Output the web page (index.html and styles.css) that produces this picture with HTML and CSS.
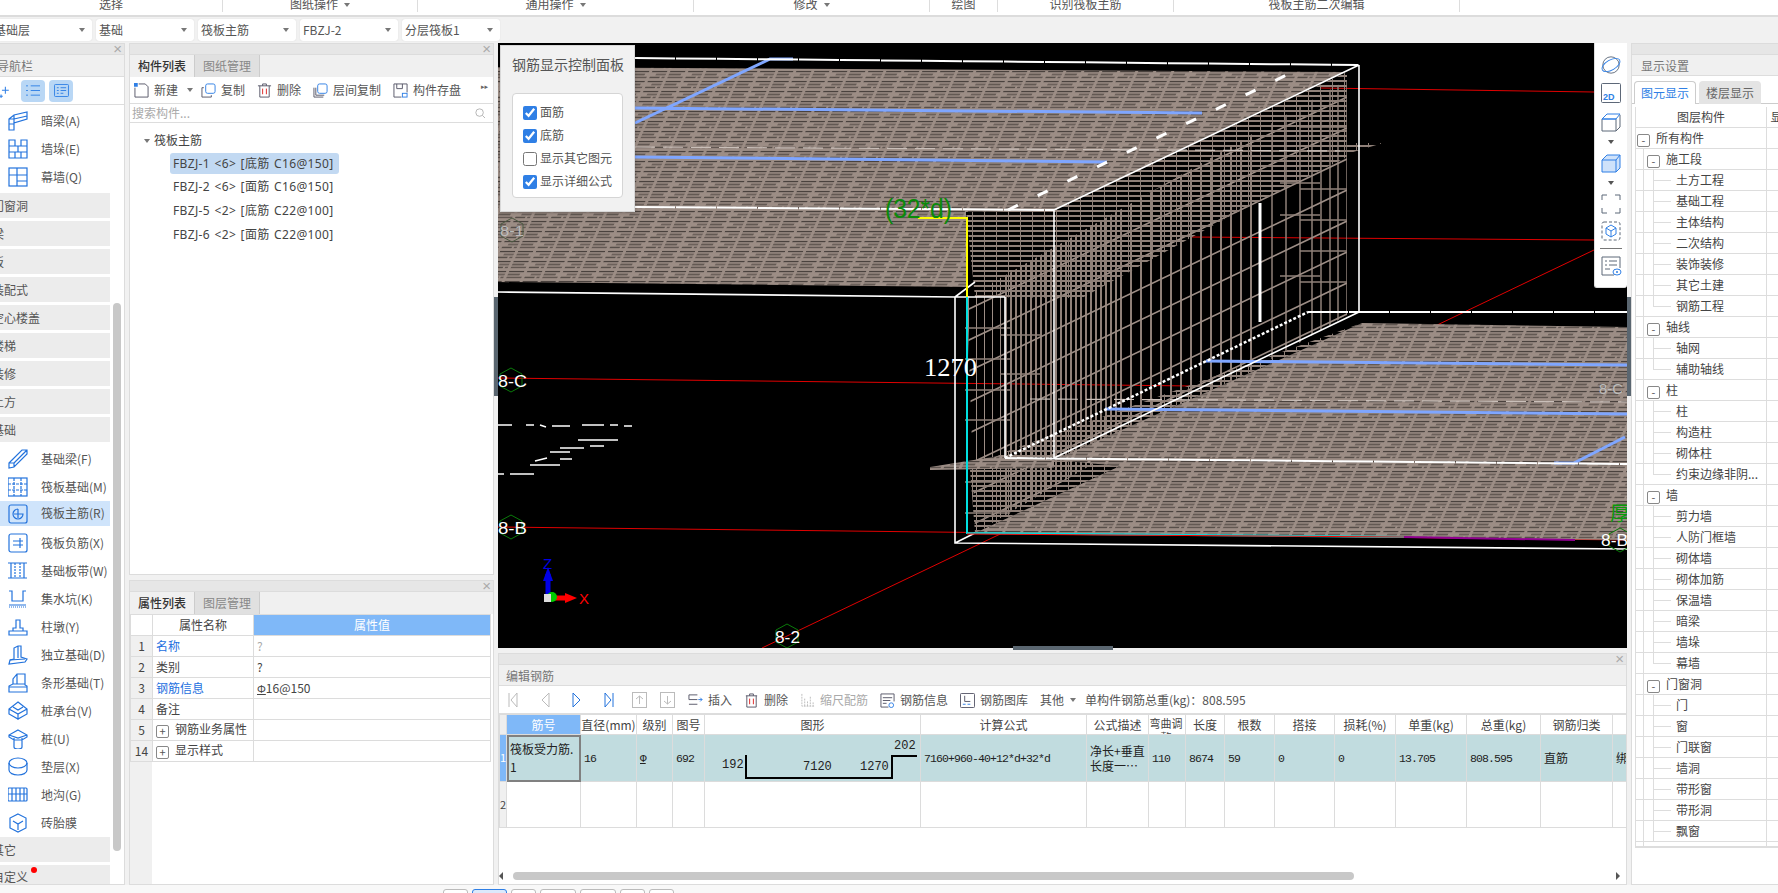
FILE: index.html
```html
<!DOCTYPE html>
<html lang="zh-CN">
<head>
<meta charset="utf-8">
<title>筏板主筋</title>
<link rel="stylesheet" href="styles.css">
</head>
<body>
<header class="ribbon">
  <div class="rb rb1">选择</div>
  <div class="rb rb2">图纸操作<i class="caret"></i></div>
  <div class="rb rb3">通用操作<i class="caret"></i></div>
  <div class="rb rb4">修改<i class="caret"></i></div>
  <div class="rb rb5">绘图</div>
  <div class="rb rb6">识别筏板主筋</div>
  <div class="rb rb7">筏板主筋二次编辑</div>
</header>
<div class="selects">
  <div class="sel sel-first"><span>基础层</span><i class="caret"></i></div>
  <div class="sel"><span>基础</span><i class="caret"></i></div>
  <div class="sel"><span>筏板主筋</span><i class="caret"></i></div>
  <div class="sel"><span>FBZJ-2</span><i class="caret"></i></div>
  <div class="sel"><span>分层筏板1</span><i class="caret"></i></div>
</div>
<main class="main">
  <aside class="nav panel">
    <div class="strip"><span class="x">×</span></div>
    <div class="title title-nav">导航栏</div>
    <div class="nav-tools">
      <svg class="spark" viewBox="0 0 10 14"><path d="M6 1v8M2 5h8M1 10v4M-1 12h4"/></svg>
      <span class="nt-btn"><svg viewBox="0 0 16 14"><path d="M5 2h10M5 7h10M5 12h10M0 2h2M0 7h2M0 12h2"/></svg></span>
      <span class="nt-btn"><svg viewBox="0 0 16 14"><rect x=".5" y=".5" width="15" height="13" rx="1"/><path d="M3 4h2M7 4h6M3 7h2M7 7h6M3 10h2M7 10h3"/></svg></span>
    </div>
    <div class="nav-list">
      <div class="ni"><svg class="ic" viewBox="0 0 20 20"><path d="M1 8l5-4 13-3v7l-13 4v7H1zM1 8h5v11M6 4v8M1 13h5M6 8l13-3"/></svg>暗梁(A)</div>
      <div class="ni"><svg class="ic" viewBox="0 0 20 20"><path d="M1 1h6v6h6V1h6v18H1zM1 7h6M13 7h6M1 13h18M10 7v6M7 13v6M13 13v6"/></svg>墙垛(E)</div>
      <div class="ni"><svg class="ic" viewBox="0 0 20 20"><rect x="1" y="1" width="18" height="18"/><path d="M1 8h18M9 1v18M9 14h10"/></svg>幕墙(Q)</div>
      <div class="cat">门窗洞</div>
      <div class="cat">梁</div>
      <div class="cat">板</div>
      <div class="cat">装配式</div>
      <div class="cat">空心楼盖</div>
      <div class="cat">楼梯</div>
      <div class="cat">装修</div>
      <div class="cat">土方</div>
      <div class="cat">基础</div>
      <div class="ni"><svg class="ic" viewBox="0 0 20 20"><path d="M1 14L14 1h5v4L6 18l-5 1zM1 14h5v4M6 14L19 1M9 11l6-6"/></svg>基础梁(F)</div>
      <div class="ni"><svg class="ic" viewBox="0 0 20 20"><rect x="0" y="1" width="19" height="18"/><path d="M0 7h19M0 13h19M6 1v18M13 1v18" stroke-dasharray="3 1"/></svg>筏板基础(M)</div>
      <div class="ni ni-on"><svg class="ic" viewBox="0 0 20 20"><rect x="1" y="1" width="18" height="18" rx="2"/><path d="M10 5a5 5 0 1 0 5 5H6M10 5v9"/></svg>筏板主筋(R)</div>
      <div class="ni"><svg class="ic" viewBox="0 0 20 20"><rect x="1" y="1" width="18" height="18" rx="2"/><path d="M5 8h10M5 12h10M12 5v10"/></svg>筏板负筋(X)</div>
      <div class="ni"><svg class="ic" viewBox="0 0 20 20"><path d="M0 2h19M0 17h19M3 2v15M16 2v15"/><path d="M7 2v15M12 2v15" stroke-dasharray="2 1"/></svg>基础板带(W)</div>
      <div class="ni"><svg class="ic" viewBox="0 0 20 20"><path d="M1 2h3v10h11V2h3M1 16h17" /><path d="M1 18h17" stroke-dasharray="1 1"/></svg>集水坑(K)</div>
      <div class="ni"><svg class="ic" viewBox="0 0 20 20"><path d="M1 18v-4h4v-3h3V3h4v8h3v3h4v4zM5 14h10"/></svg>柱墩(Y)</div>
      <div class="ni"><svg class="ic" viewBox="0 0 20 20"><path d="M6 14V3l4-2h3v11l6 2-2 3-16 2 1-4zM10 1v12"/><path d="M2 15l15-1" /></svg>独立基础(D)</div>
      <div class="ni"><svg class="ic" viewBox="0 0 20 20"><path d="M5 11V6l4-5h8v11l2 1v6H1v-6zM9 1v10M5 11h12M1 14h18"/></svg>条形基础(T)</div>
      <div class="ni"><svg class="ic" viewBox="0 0 20 20"><path d="M10 1l9 7v5l-9 5-9-5V8zM1 8l9 5 9-5M10 13v6M5 6l5 3 5-3"/></svg>桩承台(V)</div>
      <div class="ni"><svg class="ic" viewBox="0 0 20 20"><path d="M10 1l9 5v2l-5 3H6L1 8V6zM1 6l9 3 9-3M6 9v9a4 2 0 0 0 8 0V9"/></svg>桩(U)</div>
      <div class="ni"><svg class="ic" viewBox="0 0 20 20"><ellipse cx="10" cy="6" rx="9" ry="5"/><path d="M1 6v7c0 3 4 5 9 5s9-2 9-5V6"/></svg>垫层(X)</div>
      <div class="ni"><svg class="ic" viewBox="0 0 20 20"><rect x="0" y="3" width="19" height="13" rx="1"/><path d="M0 9h19M4 3v13M8 3v13M12 3v13M16 3v13"/></svg>地沟(G)</div>
      <div class="ni"><svg class="ic" viewBox="0 0 20 20"><path d="M10 1l8 4v10l-8 4-8-4V5zM5 8l5 3 5-3M10 11v6"/></svg>砖胎膜</div>
      <div class="cat cat-o">其它</div>
      <div class="cat cat-last">自定义<i class="dot"></i></div>
    </div>
    <div class="nav-scroll"></div>
  </aside>

  <div class="mid">
    <section class="panel comp">
      <div class="strip"><span class="x">×</span></div>
      <div class="tabs"><span class="tab tab-on">构件列表</span><span class="tab">图纸管理</span></div>
      <div class="comp-tools">
        <span class="ct ct-new"><svg class="tic" viewBox="0 0 16 16"><path d="M5 1h7l3 3v11H1V5"/><rect class="blue-fill" x="0" y="0" width="4" height="4"/></svg>新建<i class="caret"></i></span>
        <span class="ct"><svg class="tic" viewBox="0 0 16 16"><rect class="blue" x="5" y="1" width="10" height="10" rx="2"/><path d="M3 5H1v10h10v-2"/></svg>复制</span>
        <span class="ct"><svg class="tic" viewBox="0 0 16 16"><path d="M1 3h14M6 3V1h4v2M3 3v12h10V3"/><path class="red" d="M6 6v6M10 6v6"/></svg>删除</span>
        <span class="ct"><svg class="tic" viewBox="0 0 16 16"><rect class="blue" x="5" y="1" width="10" height="10" rx="2"/><path d="M1 5v10h10M3 5v8h9"/></svg>层间复制</span>
        <span class="ct"><svg class="tic" viewBox="0 0 16 16"><path d="M1 1h14v9M1 1v14h8M4 1v5h6V1"/><rect class="blue" x="10" y="11" width="5" height="4"/></svg>构件存盘</span>
        <span class="more">▸▸</span>
      </div>
      <div class="search"><span>搜索构件...</span><svg class="mag" viewBox="0 0 12 12"><circle cx="5.5" cy="5.5" r="4.5"/><path d="M9 9l3 3"/></svg></div>
      <div class="tree">
        <div class="tree-root"><i class="caret"></i>筏板主筋</div>
        <div class="tree-item tree-on">FBZJ-1 &lt;6&gt; [底筋 C16@150]</div>
        <div class="tree-item">FBZJ-2 &lt;6&gt; [面筋 C16@150]</div>
        <div class="tree-item">FBZJ-5 &lt;2&gt; [底筋 C22@100]</div>
        <div class="tree-item">FBZJ-6 &lt;2&gt; [面筋 C22@100]</div>
      </div>
    </section>
    <section class="panel props">
      <div class="strip"><span class="x">×</span></div>
      <div class="tabs"><span class="tab tab-on">属性列表</span><span class="tab">图层管理</span></div>
      <div class="prop-body">
        <table class="ptable">
          <colgroup><col class="pc1"><col class="pc2"><col class="pc3"></colgroup>
          <tr><th class="corner"></th><th>属性名称</th><th class="pv">属性值</th></tr>
          <tr><td class="idx">1</td><td class="link">名称</td><td class="mute">?</td></tr>
          <tr><td class="idx">2</td><td>类别</td><td>?</td></tr>
          <tr><td class="idx">3</td><td class="link">钢筋信息</td><td><span class="grade">Φ</span>16@150</td></tr>
          <tr><td class="idx">4</td><td>备注</td><td></td></tr>
          <tr><td class="idx">5</td><td><i class="box">+</i><span class="indent">钢筋业务属性</span></td><td></td></tr>
          <tr><td class="idx">14</td><td><i class="box">+</i><span class="indent">显示样式</span></td><td></td></tr>
        </table>
      </div>
    </section>
  </div>

  <div class="center">
    <div class="view">
      <svg class="scene" viewBox="498 43 1129 605" width="1129" height="605">
        <defs>
          <pattern id="mesh" width="36" height="10" patternUnits="userSpaceOnUse" patternTransform="skewX(-24)">
            <rect width="36" height="10" fill="#9c8d85"/>
            <rect x="0" y="1" width="15" height="1" fill="#352f2c"/>
            <rect x="18" y="1" width="15" height="1" fill="#352f2c"/>
            <rect x="5" y="4" width="10" height="1" fill="#453d39"/>
            <rect x="18" y="4" width="12" height="1" fill="#352f2c"/>
            <rect x="0" y="7" width="10" height="1" fill="#352f2c"/>
            <rect x="12" y="7" width="3" height="1" fill="#453d39"/>
            <rect x="18" y="7" width="15" height="1" fill="#453d39"/>
          </pattern>
          <pattern id="mesh2" width="24" height="5" patternUnits="userSpaceOnUse">
            <rect width="24" height="2" fill="#8f8078"/>
            <rect width="1" height="5" fill="#8f8078"/>
            <rect x="12" width="1" height="5" fill="#8f8078"/>
          </pattern>
          <pattern id="vg5" width="5" height="10" patternUnits="userSpaceOnUse"><rect width="2" height="10" fill="#8f8078"/></pattern>
          <pattern id="vg8" width="8" height="10" patternUnits="userSpaceOnUse"><rect width="1" height="10" fill="#9c8d85"/></pattern>
          <pattern id="vg10" width="10" height="10" patternUnits="userSpaceOnUse"><rect width="2" height="10" fill="#8f8078"/></pattern>
          <clipPath id="wall"><polygon points="967,297 1347,80 1347,315 975,533"/></clipPath>
        </defs>
        <g class="red">
          <path d="M498 378L1627 391M498 527L1627 540M762 648L1594 250M1321 88L1594 92M1190 237L1594 240"/>
        </g>
        <g clip-path="url(#wall)">
          <rect x="967" y="80" width="38" height="460" fill="url(#vg8)"/>
          <rect x="1005" y="80" width="115" height="460" fill="url(#vg5)"/>
          <rect x="1120" y="80" width="140" height="460" fill="url(#vg10)"/>
          <path class="brown2" d="M1272 80V500M1286 80V500M1300 80V500M1312 80V500M1321 80V500M1330 80V500M1338 80V500M1347 80V500"/>
          <path class="brown" d="M967 279L1347 97M967 310L1347 128M967 341L1347 159M967 372L1347 190M967 403L1347 221M967 434L1347 252M967 465L1347 283M967 496L1347 314M967 527L1347 345"/>
        </g>
        <path class="brown2" d="M965 328h45M965 359h45M965 390h45M965 420h45M965 482h45M965 513h45M1300 127h47M1300 189h47M1300 220h47M1300 251h47M1300 282h47M1000 335h40M1000 374h40M1280 183h40M1280 215h40M1280 276h40"/>
        <polygon class="mesh" points="498,67 1345,72 1054,210 966,212 966,287 498,282"/>
        <polygon class="mesh-t" points="1054,210 1347,72 1347,157 1232,215 1082,298 975,297 966,212"/>
        <polygon class="mesh-t" points="1200,143 1383,143 1340,156 1200,156"/>
        <polygon class="mesh" points="1362,323 1627,327 1627,540 975,533 1120,466 1054,460"/>
        <polygon class="mesh-t" points="1005,452 1362,323 1054,460 1120,466 975,533 970,470"/>
        <polygon class="mesh" points="930,467 1005,455 1054,460 1054,468 930,470"/>
        <path class="lite" d="M635 147L1340 151M1030 399L1627 402"/>
        <g class="blue-line">
          <path d="M635 108L1202 113M635 157L1107 162M635 123L770 59H793M1206 361L1627 365M1105 409L1627 414M1554 463H1574L1625 437"/>
        </g>
        <g class="wh">
          <path d="M498 292L955 297H1005M955 297V543L1627 549M1005 297V458M1054 210V458M1359 65V312M1054 210L1359 65M1054 458L1359 312M955 297L975 282M955 543L975 533"/>
          <path class="dash" d="M635 58L1358 65M635 207L1054 210M1005 458L1627 464M1308 312H1627"/>
          <path class="dash2" d="M1008 210L1297 70"/>
          <path class="dash3" d="M1005 458L1308 312"/>
          <path class="thick" d="M1260 203V322"/>
        </g>
        <path class="yellow" d="M918 218H967V297"/>
        <path class="cyan" d="M967 297V533L1404 537"/>
        <path class="purple" d="M1404 537L1575 540"/>
        <path class="red-strong" d="M967 534L1404 537"/>
        <path class="specks" d="M498 425h14M526 425h8M540 425l6 2M552 426h18M582 425h22M610 425h8M624 426h8M578 440h40M560 448h24M590 446h14M550 452h20M530 465h30M560 459h12M535 461l12-3M498 474h6M510 474h24"/>
        <g class="hex">
          <polygon points="511,368 522,374 522,386 511,392 500,386 500,374"/>
          <polygon points="511,515 522,521 522,533 511,539 500,533 500,521"/>
          <polygon points="787,624 798,630 798,642 787,648 776,642 776,630"/>
          <polygon class="faint" points="512,218 523,224 523,236 512,242 501,236 501,224"/>
          <polygon points="1620,528 1631,534 1631,546 1620,552 1609,546 1609,534"/>
        </g>
        <text class="axis-t" x="498" y="387" textLength="29" lengthAdjust="spacingAndGlyphs">8-C</text>
        <text class="axis-t" x="498" y="534" textLength="29" lengthAdjust="spacingAndGlyphs">8-B</text>
        <text class="axis-t" x="775" y="643" textLength="25" lengthAdjust="spacingAndGlyphs">8-2</text>
        <text class="axis-t" x="1601" y="546" textLength="27" lengthAdjust="spacingAndGlyphs">8-B</text>
        <text class="axis-f" x="500" y="236" textLength="24" lengthAdjust="spacingAndGlyphs">8-1</text>
        <text class="axis-f" x="1599" y="394" textLength="24" lengthAdjust="spacingAndGlyphs">8-C</text>
        <text class="gtxt" x="1610" y="521">厚</text>
        <text class="dim-g" x="885" y="218" textLength="67" lengthAdjust="spacingAndGlyphs">(32*d)</text>
        <text class="dim-w" x="924" y="376" textLength="53" lengthAdjust="spacingAndGlyphs">1270</text>
        <path class="ax-z" d="M548 597V574"/><polygon class="ax-zf" points="548,567 543,581 553,581"/>
        <path class="ax-x" d="M552 598H566"/><polygon class="ax-xf" points="577,598 565,593 565,603"/>
        <circle class="ax-g" cx="552" cy="597" r="5"/><rect class="ax-c" x="544" y="594" width="7" height="8"/>
        <text class="ax-zt" x="543" y="569">Z</text>
        <text class="ax-xt" x="579" y="604">X</text>
      </svg>

      <div class="sash-left"></div>
      <div class="sash-bottom"></div>
      <div class="sash-right"></div>

      <div class="rebar-box">
        <div class="rb-title">钢筋显示控制面板</div>
        <div class="rb-inner">
          <label class="chk"><input type="checkbox" checked>面筋</label>
          <label class="chk"><input type="checkbox" checked>底筋</label>
          <label class="chk"><input type="checkbox">显示其它图元</label>
          <label class="chk"><input type="checkbox" checked>显示详细公式</label>
        </div>
      </div>

      <div class="vtools">
        <svg class="v v-globe" viewBox="0 0 22 22"><circle class="gr" cx="11" cy="11" r="9"/><ellipse class="bl tilt" cx="11" cy="11" rx="11" ry="5.5"/></svg>
        <svg class="v v-2d" viewBox="0 0 20 20"><rect class="gr" x=".5" y=".5" width="19" height="19" rx="1"/><text class="t2d" x="2" y="17">2D</text></svg>
        <svg class="v v-cube" viewBox="0 0 20 20"><path class="gr" d="M1 7v12h14l4-4V3M15 19V7"/><path class="bl" d="M1 7l5-5h13l-4 5zM15 7H1"/></svg>
        <i class="vcaret"></i>
        <svg class="v v-cube" viewBox="0 0 20 20"><path class="blf" d="M1 7v12h14l4-4V2H6zM15 19V7M1 7h14l4-5"/></svg>
        <i class="vcaret"></i>
        <svg class="v v-frame" viewBox="0 0 20 20"><path class="gr" d="M1 6V1h5M14 1h5v5M19 14v5h-5M6 19H1v-5"/></svg>
        <svg class="v v-dcube" viewBox="0 0 20 20"><rect class="grd" x="1" y="1" width="18" height="18" rx="2"/><path class="bl" d="M10 4l5 3v6l-5 3-5-3V7zM5 7l5 3 5-3M10 10v6"/></svg>
        <hr class="vrule">
        <svg class="v v-list" viewBox="0 0 20 20"><path class="gr" d="M13 19H1V1h18v11M4 5h2M8 5h8M4 9h2M8 9h8M4 13h5"/><ellipse class="bl" cx="16" cy="16" rx="4" ry="3"/><circle class="blfull" cx="16" cy="16" r="1"/></svg>
      </div>
    </div>

    <section class="panel edit">
      <div class="strip"><span class="x">×</span></div>
      <div class="title title-edit">编辑钢筋</div>
      <div class="edit-tools">
        <svg class="nav-ic ni1" viewBox="0 0 10 16"><path d="M1 1v14M9 1L3 8l6 7z"/></svg>
        <svg class="nav-ic ni2" viewBox="0 0 10 16"><path d="M9 1L2 8l7 7z"/></svg>
        <svg class="nav-ic ni3 act" viewBox="0 0 10 16"><path d="M1 1l7 7-7 7z"/></svg>
        <svg class="nav-ic ni4 act" viewBox="0 0 10 16"><path d="M9 1v14M1 1l6 7-6 7z"/></svg>
        <svg class="nav-box nb1" viewBox="0 0 15 16"><rect x=".5" y=".5" width="14" height="15"/><path d="M7.5 12V4M4 7l3.5-3L11 7"/></svg>
        <svg class="nav-box nb2" viewBox="0 0 15 16"><rect x=".5" y=".5" width="14" height="15"/><path d="M7.5 4v8M4 9l3.5 3L11 9"/></svg>
        <span class="et et-ins"><svg class="tic" viewBox="0 0 16 14"><path d="M10 1H1v5h9M1 11h9"/><path class="blue" d="M11 6h4M13 4l2 2-2 2"/></svg>插入</span>
        <span class="et et-del"><svg class="tic" viewBox="0 0 14 16"><path d="M1 3h12M5 3V1h4v2M2 3v12h10V3"/><path class="red" d="M5 6v6M9 6v6"/></svg>删除</span>
        <span class="et et-off"><svg class="tic tic-off" viewBox="0 0 14 16"><path d="M1 1v13h13M4 6v8M7 9v5M10 4v10M13 10v4" stroke-dasharray="2 1"/></svg>缩尺配筋</span>
        <span class="et et-info"><svg class="tic" viewBox="0 0 16 16"><path d="M9 15H1V1h14v8M3 5h10M3 8h8M3 11h4"/><circle class="blue" cx="12" cy="13" r="2.5"/></svg>钢筋信息</span>
        <span class="et et-lib"><svg class="tic" viewBox="0 0 16 16"><rect x=".5" y=".5" width="15" height="15" rx="1"/><path d="M5 3v6h6"/><path class="blue" d="M3 12h3M8 12h3"/></svg>钢筋图库</span>
        <span class="et et-oth">其他<i class="caret"></i></span>
        <span class="et et-tot">单构件钢筋总重(kg)：808.595</span>
      </div>
      <div class="grid-wrap">
        <table class="gtable">
          <colgroup>
            <col class="c7"><col class="c74"><col class="c56"><col class="c36"><col class="c32"><col class="c216"><col class="c166"><col class="c62"><col class="c37"><col class="c39"><col class="c50"><col class="c60"><col class="c61"><col class="c71"><col class="c74"><col class="c72"><col class="c16">
          </colgroup>
          <tr class="gh">
            <th class="gcorner"></th><th class="gsel">筋号</th><th>直径(mm)</th><th>级别</th><th>图号</th><th>图形</th><th>计算公式</th><th>公式描述</th><th class="wrap-h"><span>弯曲调整</span></th><th>长度</th><th>根数</th><th>搭接</th><th>损耗(%)</th><th>单重(kg)</th><th>总重(kg)</th><th>钢筋归类</th><th></th>
          </tr>
          <tr class="gr1">
            <td class="rn rn-on">1</td>
            <td class="cur">筏板受力筋.<br>1</td>
            <td class="mono">16</td>
            <td class="mono"><span class="grade">Φ</span></td>
            <td class="mono">692</td>
            <td class="shape">
              <div class="shape-in">
                <svg class="bar" viewBox="0 0 216 46" width="216" height="46"><path d="M41 20V43H187V21H212"/></svg>
                <span class="sn sn1">192</span><span class="sn sn2">7120</span><span class="sn sn3">1270</span><span class="sn sn4">202</span>
              </div>
            </td>
            <td class="mono">7160+960-40+12*d+32*d</td>
            <td class="desc">净长+垂直长度一…</td>
            <td class="mono">110</td>
            <td class="mono">8674</td>
            <td class="mono">59</td>
            <td class="mono">0</td>
            <td class="mono">0</td>
            <td class="mono">13.705</td>
            <td class="mono">808.595</td>
            <td>直筋</td>
            <td class="clip">绑</td>
          </tr>
          <tr class="gr2">
            <td class="rn">2</td><td></td><td></td><td></td><td></td><td></td><td></td><td></td><td></td><td></td><td></td><td></td><td></td><td></td><td></td><td></td><td></td>
          </tr>
        </table>
        <div class="hscroll">
          <i class="sa sa-l"></i><div class="thumb"></div><i class="sa sa-r"></i>
        </div>
      </div>
    </section>
  </div>

  <aside class="right panel">
    <div class="strip"></div>
    <div class="title title-right">显示设置</div>
    <div class="r-tabs"><span class="r-tab r-on">图元显示</span><span class="r-tab">楼层显示</span></div>
    <div class="r-table">
      <div class="r-row r-head"><div>图层构件</div><div>显</div></div>
      <div class="r-row"><div class="l0"><i class="box">-</i>所有构件</div><div></div></div>
      <div class="r-row"><div class="l1 g0"><i class="box">-</i>施工段</div><div></div></div>
      <div class="r-row"><div class="l2 g1">土方工程</div><div></div></div>
      <div class="r-row"><div class="l2 g1">基础工程</div><div></div></div>
      <div class="r-row"><div class="l2 g1">主体结构</div><div></div></div>
      <div class="r-row"><div class="l2 g1">二次结构</div><div></div></div>
      <div class="r-row"><div class="l2 g1">装饰装修</div><div></div></div>
      <div class="r-row"><div class="l2 g1">其它土建</div><div></div></div>
      <div class="r-row"><div class="l2 g1 g-end">钢筋工程</div><div></div></div>
      <div class="r-row"><div class="l1 g0"><i class="box">-</i>轴线</div><div></div></div>
      <div class="r-row"><div class="l2 g1">轴网</div><div></div></div>
      <div class="r-row"><div class="l2 g1 g-end">辅助轴线</div><div></div></div>
      <div class="r-row"><div class="l1 g0"><i class="box">-</i>柱</div><div></div></div>
      <div class="r-row"><div class="l2 g1">柱</div><div></div></div>
      <div class="r-row"><div class="l2 g1">构造柱</div><div></div></div>
      <div class="r-row"><div class="l2 g1">砌体柱</div><div></div></div>
      <div class="r-row"><div class="l2 g1 g-end">约束边缘非阴...</div><div></div></div>
      <div class="r-row"><div class="l1 g0"><i class="box">-</i>墙</div><div></div></div>
      <div class="r-row"><div class="l2 g1">剪力墙</div><div></div></div>
      <div class="r-row"><div class="l2 g1">人防门框墙</div><div></div></div>
      <div class="r-row"><div class="l2 g1">砌体墙</div><div></div></div>
      <div class="r-row"><div class="l2 g1">砌体加筋</div><div></div></div>
      <div class="r-row"><div class="l2 g1">保温墙</div><div></div></div>
      <div class="r-row"><div class="l2 g1">暗梁</div><div></div></div>
      <div class="r-row"><div class="l2 g1">墙垛</div><div></div></div>
      <div class="r-row"><div class="l2 g1 g-end">幕墙</div><div></div></div>
      <div class="r-row"><div class="l1 g0"><i class="box">-</i>门窗洞</div><div></div></div>
      <div class="r-row"><div class="l2 g1">门</div><div></div></div>
      <div class="r-row"><div class="l2 g1">窗</div><div></div></div>
      <div class="r-row"><div class="l2 g1">门联窗</div><div></div></div>
      <div class="r-row"><div class="l2 g1">墙洞</div><div></div></div>
      <div class="r-row"><div class="l2 g1">带形窗</div><div></div></div>
      <div class="r-row"><div class="l2 g1">带形洞</div><div></div></div>
      <div class="r-row"><div class="l2 g1">飘窗</div><div></div></div>
      <div class="r-row r-stub"><div class="g0 g1"></div><div></div></div>
    </div>
  </aside>
</main>
<footer class="foot">
  <span class="ft ft25"></span><span class="ft ft35 ft-on"></span><span class="ft ft25"></span><span class="ft ft36"></span><span class="ft ft36"></span><span class="ft ft25"></span><span class="ft ft25"></span>
</footer>
</body>
</html>
```
FILE: styles.css
```css
* { box-sizing: border-box; }
html, body { margin: 0; height: 893px; overflow: hidden; }
body {
  width: 1778px;
  background: #f1f1f1;
  color: #444;
  font: 12px/1.2 "Noto Sans CJK SC", "Noto Sans", sans-serif;
  display: flex;
  flex-direction: column;
}
i { font-style: normal; }
.caret {
  display: inline-block;
  width: 0; height: 0;
  border: 3px solid transparent;
  border-top: 4px solid #777;
  border-bottom: 0;
}

/* ribbon */
.ribbon { display: flex; height: 17px; flex: none; background: #fff; border-bottom: 2px solid #dcdcdc; overflow: hidden; }
.rb { height: 12px; line-height: 8px; text-align: center; border-right: 1px solid #ddd; color: #555; white-space: nowrap; }
.rb .caret { margin-left: 6px; vertical-align: 2px; }
.rb1 { width: 223px; } .rb2 { width: 195px; } .rb3 { width: 276px; } .rb4 { width: 236px; }
.rb5 { width: 68px; } .rb6 { width: 176px; } .rb7 { width: 286px; }

/* selects */
.selects { display: flex; height: 26px; flex: none; gap: 4px; padding-top: 2px; }
.sel { width: 98px; height: 22px; background: #fff; border-radius: 3px; box-shadow: 0 0 1px #ccc; display: flex; align-items: center; justify-content: space-between; padding: 0 7px 0 3px; color: #555; font-size: 12px; }
.sel-first { width: 92px; padding-left: 0; border-radius: 0 3px 3px 0; }
.sel-first span { margin-left: -6px; }

/* main grid */
.main { display: flex; height: 842px; flex: none; }
.panel { background: #fff; border: 1px solid #dcdcdc; position: relative; overflow: hidden; }
.strip { height: 11px; background: #e6e6e6; border-bottom: 1px solid #dcdcdc; position: relative; }
.x { position: absolute; right: 2px; top: -3px; font: 15px/15px "Liberation Sans", sans-serif; color: #aaa; }
.title { height: 22px; background: #f0f0f0; border-bottom: 1px solid #ddd; line-height: 21px; color: #777; }

/* nav */
.nav { width: 125px; flex: none; border-left: 0; }
.title-nav { text-indent: -3px; }
.nav-tools { height: 28px; display: flex; align-items: center; gap: 4px; border-bottom: 1px solid #ddd; padding-left: 21px; position: relative; }
.spark { position: absolute; left: 0; top: 9px; width: 9px; height: 12px; fill: none; stroke: #2f7fe5; stroke-width: 1.2; overflow: visible; }
.nt-btn { width: 24px; height: 22px; border-radius: 4px; background: #b9d7f5; display: flex; align-items: center; justify-content: center; }
.nt-btn svg { width: 15px; height: 13px; fill: none; stroke: #2f7fe5; stroke-width: 1; }
.nav-list { width: 110px; overflow: hidden; height: 782px; padding-top: 2px; }
.ni { height: 28px; display: flex; align-items: center; padding-left: 8px; white-space: nowrap; color: #555; }
.ni-on { background: #cfe4fb; height: 25px; margin-bottom: 3px; }
.ic { width: 20px; height: 20px; margin-right: 13px; flex: none; fill: none; stroke: #2272dc; stroke-width: 1.2; }
.cat { height: 25px; margin-bottom: 3px; background: #ececec; line-height: 25px; text-indent: -8px; position: relative; color: #555; white-space: nowrap; overflow: hidden; }
.ni + .cat { margin-top: 2px; }
.ni + .cat-o { margin-top: 0; }
.cat-last { height: 20px; margin-bottom: 0; overflow: visible; line-height: 24px; }
.dot { position: absolute; left: 31px; top: 2px; width: 6px; height: 6px; border-radius: 50%; background: #f00; }
.nav-scroll { position: absolute; left: 113px; top: 259px; width: 8px; height: 548px; border-radius: 4px; background: #c8c8c8; }

/* middle */
.mid { width: 365px; flex: none; margin-left: 4px; display: flex; flex-direction: column; gap: 5px; }
.comp { height: 532px; flex: none; }
.props { height: 305px; flex: none; }
.tabs { height: 22px; background: #f0f0f0; display: flex; }
.tab { width: 65px; height: 22px; background: #e0e0e0; color: #888; text-align: center; line-height: 22px; border-right: 1px solid #ccc; }
.tab-on { background: #f0f0f0; color: #333; font-weight: 500; }
.comp-tools { height: 27px; display: flex; align-items: center; padding-left: 4px; border-bottom: 1px solid #ddd; position: relative; color: #555; white-space: nowrap; }
.ct { display: flex; align-items: center; margin-right: 12px; }
.ct-new .caret { margin-left: 9px; }
.ct-new { margin-right: 8px; }
.tic { width: 15px; height: 15px; margin-right: 5px; fill: none; stroke: #556; stroke-width: 1; flex: none; }
.tic .blue, .blue { stroke: #2f7fe5; }
.tic .red { stroke: #d22; }
.tic .blue-fill { fill: #2f7fe5; stroke: none; }
.more { position: absolute; right: 2px; top: 1px; width: 10px; height: 19px; font: 7px/19px "DejaVu Sans", sans-serif; color: #666; }
.search { height: 19px; border-bottom: 1px solid #ddd; display: flex; align-items: center; justify-content: space-between; padding: 0 8px 0 2px; color: #aaa; }
.mag { width: 10px; height: 10px; fill: none; stroke: #aaa; overflow: visible; }
.tree { padding-top: 5px; }
.tree-root { height: 24px; line-height: 24px; padding-left: 14px; }
.tree-root .caret { margin-right: 4px; vertical-align: 2px; }
.tree-item { height: 24px; line-height: 24px; margin-left: 40px; padding-left: 3px; width: 169px; white-space: nowrap; font-family: "Noto Sans", "Noto Sans CJK SC", sans-serif; letter-spacing: .35px; word-spacing: 1px; }
.tree-on { background: #c2d9f2; border-radius: 3px; height: 21px; line-height: 21px; margin-top: 1px; margin-bottom: 1px; }
.prop-body { height: 272px; background: linear-gradient(90deg, #f0f0f0 22px, #fff 22px); }
.ptable { width: 361px; table-layout: fixed; border-collapse: collapse; background: #fff; }
.pc1 { width: 22px; } .pc2 { width: 101px; }
.ptable th, .ptable td { height: 21px; border: 1px solid #dcdcdc; padding: 0 3px; font-weight: 400; white-space: nowrap; overflow: hidden; }
.ptable th { background: #fff; color: #444; }
.ptable .pv { background: #7fb8f8; color: #fff; }
.ptable .idx { background: #f0f0f0; text-align: center; padding: 0; }
.ptable .link { color: #1c6fe0; }
.ptable .mute { color: #aaa; }
.box { display: inline-block; width: 13px; height: 13px; border: 1px solid #888; border-radius: 2px; line-height: 10px; text-align: center; font-size: 11px; color: #555; background: #fff; vertical-align: -2px; }
.indent { margin-left: 6px; }
.grade { text-decoration: underline; font-size: 11px; }

/* center */
.center { width: 1129px; flex: none; margin-left: 4px; display: flex; flex-direction: column; gap: 5px; }
.view { height: 605px; flex: none; background: #000; position: relative; }
.scene { display: block; }
.scene .red, .red { fill: none; }
.scene .red { stroke: #e00000; stroke-width: 1; }
.mesh { fill: url(#mesh); }
.mesh-t { fill: url(#mesh2); }
.brown { fill: none; stroke: #9c8d85; stroke-width: 1.6; }
.brown2 { fill: none; stroke: #8f8078; stroke-width: 1.5; }
.lite { fill: none; stroke: #c9bfb9; stroke-width: 1.2; stroke-dasharray: 20 8; }
.blue-line { fill: none; stroke: #7fa6ff; stroke-width: 3; }
.wh { fill: none; stroke: #fff; stroke-width: 1.6; }
.wh .dash { stroke-width: 2; stroke-dasharray: 40 1; }
.wh .dash2 { stroke-width: 3; stroke-dasharray: 11 22; }
.wh .dash3 { stroke-width: 2.5; stroke-dasharray: 3 2; }
.wh .thick { stroke-width: 3; }
.yellow { fill: none; stroke: #ff0; stroke-width: 2; }
.cyan { fill: none; stroke: #00e0e0; stroke-width: 2; }
.purple { fill: none; stroke: #900090; stroke-width: 2; }
.red-strong { fill: none; stroke: #f00; stroke-width: 1; }
.specks { fill: none; stroke: #fff; stroke-width: 1.5; }
.hex { fill: none; stroke: #0a7a0a; stroke-width: 1; }
.hex .faint { stroke: #4d5a42; }
.axis-t { fill: #fff; font: 17px "Liberation Sans", sans-serif; }
.axis-f { fill: #bbb; font: 14px "Liberation Sans", sans-serif; }
.gtxt { fill: #0a9a0a; font: 20px "Noto Sans CJK SC", sans-serif; }
.dim-g { fill: #0a8a0a; font: 28px "Liberation Sans", sans-serif; }
.dim-w { fill: #fff; font: 26px "Liberation Serif", serif; }
.ax-z { stroke: #0000e6; stroke-width: 5; }
.ax-zf { fill: #0000e6; }
.ax-x { stroke: #f00; stroke-width: 5; }
.ax-xf { fill: #f00; }
.ax-g { fill: #0c0; }
.ax-c { fill: #ddd; }
.ax-zt { fill: #0000e6; font: 15px "Liberation Sans", sans-serif; }
.ax-xt { fill: #f00; font: 15px "Liberation Sans", sans-serif; }

.sash-left { position: absolute; left: -4px; top: 254px; width: 4px; height: 99px; background: #5a6670; }
.sash-bottom { position: absolute; left: 515px; bottom: -2px; width: 100px; height: 4px; background: #5a6670; }
.sash-right { position: absolute; right: -5px; top: 254px; width: 5px; height: 99px; background: #5a6670; }

.rebar-box { position: absolute; left: 2px; top: 2px; width: 135px; height: 167px; background: #f1f1f1; border: 1px solid #d8d8d8; box-shadow: 0 1px 3px rgba(0,0,0,.2); padding: 0 11px; }
.rb-title { font-size: 14px; line-height: 20px; height: 47px; padding-top: 8px; white-space: nowrap; margin-right: -6px; color: #555; }
.rb-inner { height: 105px; background: #fff; border: 1px solid #d5d5d5; border-radius: 4px; padding: 7px 0 0 10px; }
.chk { display: flex; align-items: center; height: 23px; white-space: nowrap; color: #555; }
.chk input { width: 14px; height: 14px; margin: 0 3px 0 0; accent-color: #2f7fe5; }

.vtools { position: absolute; right: 0; top: 0; width: 33px; height: 245px; background: #fff; border-radius: 0 0 3px 3px; border: 1px solid #ddd; border-width: 0 0 1px 1px; display: flex; flex-direction: column; align-items: center; padding-top: 12px; }
.v { width: 20px; height: 20px; flex: none; fill: none; stroke-width: 1; overflow: visible; }
.gr { fill: none; stroke: #5d6878; }
.grd { fill: none; stroke: #5d6878; stroke-dasharray: 3 2; }
.bl { fill: none; stroke: #2f7fe5; }
.tilt { transform: rotate(-30deg); transform-origin: 11px 11px; }
.blf { fill: #cfe2fa; stroke: #2f7fe5; }
.blfull { fill: #2f7fe5; }
.t2d { fill: #2f7fe5; font: bold 9px "Liberation Sans", sans-serif; stroke: none; }
.v-2d { margin-top: 8px; }
.v-cube { margin-top: 9px; }
.v-frame { margin-top: 9px; }
.v-dcube { margin-top: 7px; }
.vcaret { width: 0; height: 0; border: 3px solid transparent; border-top: 4px solid #555; border-bottom: 0; margin-top: 8px; }
.vrule { width: 22px; height: 0; margin: 7px 0 0; border: 0; border-top: 1px solid #777; }
.v-list { margin-top: 7px; }

/* edit */
.edit { height: 232px; flex: none; }
.title-edit { padding-left: 7px; height: 21px; }
.edit-tools { height: 28px; position: relative; border-bottom: 1px solid #ddd; color: #555; }
.nav-ic { position: absolute; top: 6px; width: 10px; height: 16px; fill: none; stroke: #bbb; }
.nav-ic.act { stroke: #2272dc; }
.ni1 { left: 9px; } .ni2 { left: 41px; } .ni3 { left: 73px; } .ni4 { left: 105px; }
.nav-box { position: absolute; top: 6px; width: 15px; height: 16px; fill: none; stroke: #bbb; }
.nb1 { left: 133px; } .nb2 { left: 161px; }
.et { position: absolute; top: 4px; height: 20px; display: flex; align-items: center; white-space: nowrap; }
.et-ins { left: 189px; } .et-del { left: 245px; } .et-off { left: 301px; color: #aaa; } .et-info { left: 381px; }
.et-lib { left: 461px; } .et-oth { left: 541px; } .et-tot { left: 586px; }
.et-oth .caret { margin-left: 6px; }
.tic-off { stroke: #bbb; }
.grid-wrap { position: relative; height: 169px; }
.gtable { width: 1127px; table-layout: fixed; border-collapse: collapse; color: #444; }
.c7 { width: 7px; } .c74 { width: 74px; } .c56 { width: 56px; } .c36 { width: 36px; } .c32 { width: 32px; }
.c216 { width: 216px; } .c166 { width: 166px; } .c62 { width: 62px; } .c37 { width: 37px; } .c39 { width: 39px; }
.c50 { width: 50px; } .c60 { width: 60px; } .c61 { width: 61px; } .c71 { width: 71px; } .c72 { width: 72px; } .c16 { width: 15px; }
.gtable th, .gtable td { border: 1px solid #dcdcdc; padding: 0 3px; overflow: hidden; }
.gtable th { height: 20px; font-weight: 400; white-space: nowrap; background: #fff; padding: 0; line-height: 14px; }
.gtable .gcorner { background: #eee; padding: 0; }
.gtable .gsel { background: #7fb8f8; color: #fff; }
.wrap-h span { display: block; width: 34px; margin: -3px 0 0; white-space: normal; line-height: 14px; height: 14px; font-size: 11px; }
.gr1 td { height: 46px; background: #c1dcdf; color: #222; }
.gr2 td { height: 46px; background: #fff; }
.gtable .rn { padding: 0; text-align: center; font-size: 11px; background: #f0f0f0; }
.gtable .rn-on { background: #7fb8f8; color: #fff; }
.gtable .cur { outline: 2px solid #808080; outline-offset: -2px; line-height: 18px; }
.mono { font: 11.5px "Liberation Mono", monospace; letter-spacing: -.9px; white-space: nowrap; }
.desc { line-height: 15px; font-size: 12px; }
.clip { white-space: nowrap; }
.gtable .shape { padding: 0; }
.shape-in { position: relative; width: 216px; height: 46px; }
.bar { display: block; fill: none; stroke: #000; stroke-width: 2; }
.sn { position: absolute; font: 12px "Liberation Mono", monospace; color: #222; }
.sn1 { left: 17px; top: 23px; } .sn2 { left: 98px; top: 25px; } .sn3 { left: 155px; top: 25px; } .sn4 { left: 189px; top: 4px; }
.hscroll { position: absolute; left: 0; right: 0; bottom: 0; height: 14px; display: flex; align-items: center; }
.thumb { position: absolute; left: 14px; width: 841px; height: 8px; background: #c8c8c8; border-radius: 4px; }
.sa { position: absolute; width: 0; height: 0; border: 4px solid transparent; }
.sa-l { left: 0; border-right: 4px solid #555; border-left: 0; }
.sa-r { right: 6px; border-left: 4px solid #555; border-right: 0; }

/* right */
.right { width: 147px; flex: none; margin-left: 4px; border-right: 0; }
.title-right { padding-left: 9px; height: 21px; }
.r-tabs { display: flex; gap: 3px; height: 28px; padding: 5px 0 0 2px; background: #fff; border-bottom: 1px solid #ccc; }
.r-tab { width: 62px; height: 23px; background: #e4e4e4; border-radius: 4px 4px 0 0; text-align: center; line-height: 23px; color: #666; }
.r-on { background: #fff; border: 1px solid #ccc; border-bottom: 0; color: #2f7fe5; line-height: 22px; }
.r-table { margin: 3px 0 0 3px; width: 143px; height: 741px; border-left: 1px solid #ddd; border-bottom: 1px solid #ddd; overflow: hidden; }
.r-row { display: grid; grid-template-columns: 131px 20px; height: 21px; border-bottom: 1px solid #ddd; }
.r-row > div { border-right: 1px solid #ddd; line-height: 20px; position: relative; white-space: nowrap; overflow: hidden; }
.r-row .box { margin-right: 6px; position: relative; z-index: 1; }
.r-head > div { text-align: center; }
.l0 { padding-left: 1px; }
.l1 { padding-left: 11px; }
.l2 { padding-left: 40px; }
.g0::before { content: ""; position: absolute; left: 7px; top: 0; bottom: 0; width: 1px; background: #ddd; }
.g1::before { content: ""; position: absolute; left: 7px; top: 0; bottom: 0; width: 1px; background: #ddd; }
.g1::after { content: ""; position: absolute; left: 17px; top: 0; height: 10px; width: 17px; border-left: 1px solid #ddd; border-bottom: 1px solid #ddd; }
.g1:not(.g-end)::after { height: 21px; border-bottom: 0; background: linear-gradient(#ddd, #ddd) 0 10px / 100% 1px no-repeat; }
.r-stub { height: 5px; }
.r-stub .g1::after { display: none; }

/* footer */
.foot { flex: 1; background: #f8f8f8; display: flex; padding: 4px 0 0 443px; gap: 4px; overflow: hidden; }
.ft { height: 10px; border: 1px solid #bbb; border-radius: 3px 3px 0 0; background: #fff; }
.ft25 { width: 25px; } .ft35 { width: 35px; } .ft36 { width: 36px; }
.ft-on { border-color: #2f7fe5; background: #dbe9fb; }
```
